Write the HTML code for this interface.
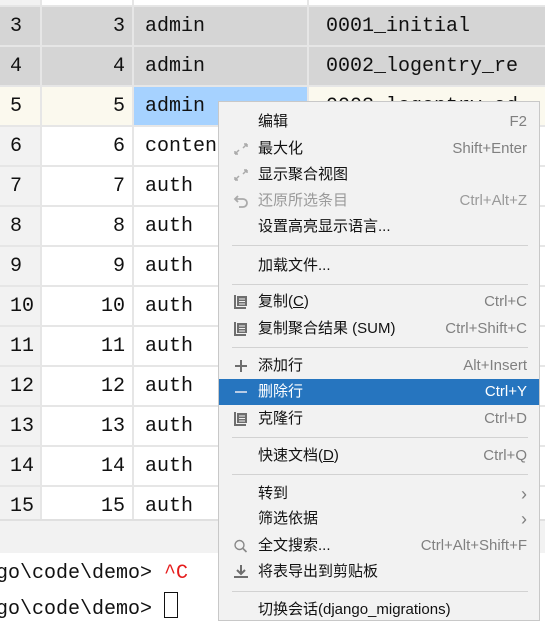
<!DOCTYPE html>
<html><head><meta charset="utf-8"><style>
*{margin:0;padding:0;box-sizing:border-box}
body{width:545px;height:615px;overflow:hidden;background:#fff;position:relative;font-family:"Liberation Mono",monospace}
.row{position:absolute;left:0;width:545px;height:40px;border-bottom:2px solid #e6e6e6;font-size:20px;color:#111}
.row div{position:absolute;top:0;height:38px;line-height:40px}
.n{left:0;width:42px;background:#f2f2f2;padding-left:10px;border-right:2px solid #e6e6e6}
.id{left:42px;width:92px;text-align:right;padding-right:7px;border-right:2px solid #e6e6e6}
.nm{left:134px;width:175px;padding-left:11px;border-right:2px solid #e6e6e6}
.mg{left:309px;width:240px;padding-left:17px}
.g div{background:#d5d5d5}
.menu{position:absolute;left:218px;top:101px;width:322px;height:520px;background:#f2f2f2;border:1px solid #c8c8c8;font-family:"Liberation Sans","Noto Sans CJK SC",sans-serif;font-size:15px;color:#111}
.it{position:absolute;left:0;width:320px;height:26px;line-height:26px}
.it .t{position:absolute;left:39px}
.it .k{position:absolute;right:12px;color:#808080}
.it.dis .t{color:#9a9a9a}
.it.sel{background:#2675bf;color:#fff}
.it.sel .k{color:#fff}
.sep{position:absolute;left:13px;width:296px;height:1px;background:#d2d2d2}
.ic{position:absolute;left:14px;top:6px;width:16px;height:14px}
u{text-decoration:underline}
</style></head><body>
<div class="row" style="top:-33px"><div class="n"></div><div class="id"></div><div class="nm"></div><div class="mg"></div></div>
<div class="row g" style="top:7px"><div class="n">3</div><div class="id">3</div><div class="nm">admin</div><div class="mg">0001_initial</div></div>
<div class="row g" style="top:47px"><div class="n">4</div><div class="id">4</div><div class="nm">admin</div><div class="mg">0002_logentry_re</div></div>
<div class="row" style="top:87px;background:#fbf9ee"><div class="n" style="background:#fbf9ee">5</div><div class="id">5</div><div class="nm" style="background:#a6d2ff">admin</div><div class="mg">0003_logentry_ad</div></div>
<div class="row" style="top:127px"><div class="n">6</div><div class="id">6</div><div class="nm">contenttypes</div><div class="mg">0001_initial</div></div>
<div class="row" style="top:167px"><div class="n">7</div><div class="id">7</div><div class="nm">auth</div><div class="mg">0001_initial</div></div>
<div class="row" style="top:207px"><div class="n">8</div><div class="id">8</div><div class="nm">auth</div><div class="mg">0002_alter_</div></div>
<div class="row" style="top:247px"><div class="n">9</div><div class="id">9</div><div class="nm">auth</div><div class="mg">0003_alter_</div></div>
<div class="row" style="top:287px"><div class="n">10</div><div class="id">10</div><div class="nm">auth</div><div class="mg">0004_alter_</div></div>
<div class="row" style="top:327px"><div class="n">11</div><div class="id">11</div><div class="nm">auth</div><div class="mg">0005_alter_</div></div>
<div class="row" style="top:367px"><div class="n">12</div><div class="id">12</div><div class="nm">auth</div><div class="mg">0006_requir</div></div>
<div class="row" style="top:407px"><div class="n">13</div><div class="id">13</div><div class="nm">auth</div><div class="mg">0007_alter_</div></div>
<div class="row" style="top:447px"><div class="n">14</div><div class="id">14</div><div class="nm">auth</div><div class="mg">0008_alter_</div></div>
<div class="row" style="top:487px"><div class="n">15</div><div class="id">15</div><div class="nm">auth</div><div class="mg">0009_alter_</div></div>
<div style="position:absolute;left:0;top:519px;width:545px;height:34px;background:#f2f2f2;border-top:2px solid #e0e0e0"></div>
<div style="position:absolute;left:0;top:553px;width:545px;height:62px;background:#fff;font-size:20px;color:#111;white-space:pre;line-height:36px">
<div style="position:absolute;left:-4px;top:3px">go\code\demo&gt; <span style="color:#e51c1c">^C</span></div>
<div style="position:absolute;left:-4px;top:39px">go\code\demo&gt; <span style="display:inline-block;width:14px;height:26px;border:1.5px solid #111;vertical-align:-4px"></span></div>
</div>
<div class="menu">
<div class="it" style="top:7px"><span class="t">编辑</span><span class="k">F2</span></div>
<div class="it" style="top:34px"><svg class="ic" viewBox="0 0 16 14"><path d="M2 12L6 8M2 12V9M2 12H5M14 2L10 6M14 2V5M14 2H11" stroke="#aaa" stroke-width="1.5" fill="none"/></svg><span class="t">最大化</span><span class="k">Shift+Enter</span></div>
<div class="it" style="top:60px"><svg class="ic" viewBox="0 0 16 14"><path d="M2 12L6 8M2 12V9M2 12H5M14 2L10 6M14 2V5M14 2H11" stroke="#aaa" stroke-width="1.5" fill="none"/></svg><span class="t">显示聚合视图</span></div>
<div class="it dis" style="top:86px"><svg class="ic" viewBox="0 0 16 14"><path d="M5 2L2 5L5 8M2 5H10A4 4 0 0 1 10 13H6" stroke="#aaa" stroke-width="1.8" fill="none"/></svg><span class="t">还原所选条目</span><span class="k" style="color:#9a9a9a">Ctrl+Alt+Z</span></div>
<div class="it" style="top:112px"><span class="t">设置高亮显示语言...</span></div>
<div class="sep" style="top:143px"></div>
<div class="it" style="top:151px"><span class="t">加载文件...</span></div>
<div class="sep" style="top:182px"></div>
<div class="it" style="top:187px"><svg class="ic" viewBox="0 0 16 14"><path d="M1 0H3V12H13V14H1Z" fill="#6e6e6e"/><rect x="4" y="1" width="10" height="10" fill="#6e6e6e"/><path d="M6 4H12M6 6.5H12M6 9H12" stroke="#f2f2f2" stroke-width="1"/></svg><span class="t">复制(<u>C</u>)</span><span class="k">Ctrl+C</span></div>
<div class="it" style="top:214px"><svg class="ic" viewBox="0 0 16 14"><path d="M1 0H3V12H13V14H1Z" fill="#6e6e6e"/><rect x="4" y="1" width="10" height="10" fill="#6e6e6e"/><path d="M6 4H12M6 6.5H12M6 9H12" stroke="#f2f2f2" stroke-width="1"/></svg><span class="t">复制聚合结果 (SUM)</span><span class="k">Ctrl+Shift+C</span></div>
<div class="sep" style="top:245px"></div>
<div class="it" style="top:251px"><svg class="ic" viewBox="0 0 16 14"><path d="M8 1V13M2 7H14" stroke="#6e6e6e" stroke-width="2"/></svg><span class="t">添加行</span><span class="k">Alt+Insert</span></div>
<div class="it sel" style="top:277px"><svg class="ic" viewBox="0 0 16 14"><path d="M2 7H14" stroke="#b8cce6" stroke-width="2"/></svg><span class="t">删除行</span><span class="k">Ctrl+Y</span></div>
<div class="it" style="top:304px"><svg class="ic" viewBox="0 0 16 14"><path d="M1 0H3V12H13V14H1Z" fill="#6e6e6e"/><rect x="4" y="1" width="10" height="10" fill="#6e6e6e"/><path d="M6 4H12M6 6.5H12M6 9H12" stroke="#f2f2f2" stroke-width="1"/></svg><span class="t">克隆行</span><span class="k">Ctrl+D</span></div>
<div class="sep" style="top:335px"></div>
<div class="it" style="top:341px"><span class="t">快速文档(<u>D</u>)</span><span class="k">Ctrl+Q</span></div>
<div class="sep" style="top:372px"></div>
<div class="it" style="top:379px"><span class="t">转到</span><span class="k" style="font-size:18px">&#8250;</span></div>
<div class="it" style="top:404px"><span class="t">筛选依据</span><span class="k" style="font-size:18px">&#8250;</span></div>
<div class="it" style="top:431px"><svg class="ic" viewBox="0 0 16 14"><circle cx="6.5" cy="6" r="4.5" stroke="#888" stroke-width="1.4" fill="none"/><path d="M10 9.5L13.5 13" stroke="#888" stroke-width="1.6"/></svg><span class="t">全文搜索...</span><span class="k">Ctrl+Alt+Shift+F</span></div>
<div class="it" style="top:457px"><svg class="ic" viewBox="0 0 16 14"><path d="M8 0V8M4 5L8 9L12 5M1 12H15" stroke="#6e6e6e" stroke-width="2" fill="none"/></svg><span class="t">将表导出到剪贴板</span></div>
<div class="sep" style="top:489px"></div>
<div class="it" style="top:495px"><span class="t">切换会话(django_migrations)</span></div>
</div>
</body></html>
